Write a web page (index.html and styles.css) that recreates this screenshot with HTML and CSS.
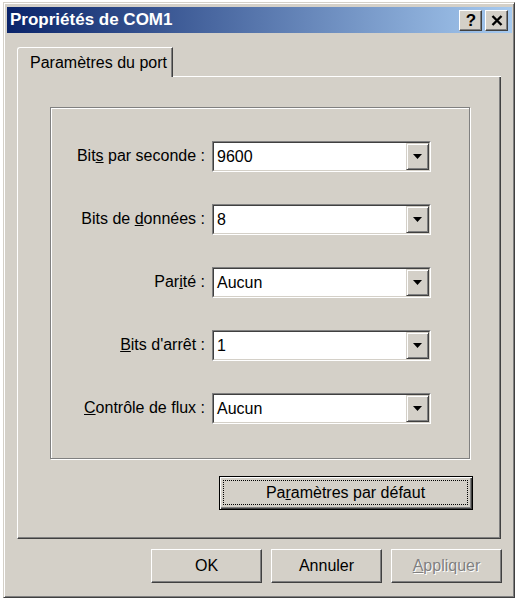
FILE: index.html
```html
<!DOCTYPE html>
<html lang="fr">
<head>
<meta charset="utf-8">
<title>Propriétés de COM1</title>
<link rel="stylesheet" href="styles.css">
</head>
<body>
<div class="window">
  <div class="titlebar">
    <span class="title">Propriétés de COM1</span>
    <div class="tbtns">
      <div class="tbtn help">?</div>
      <div class="tbtn close">
        <svg width="12" height="11" viewBox="0 0 12 11"><path d="M1.5 1 L10.5 10 M10.5 1 L1.5 10" stroke="#000" stroke-width="2.4" fill="none"/></svg>
      </div>
    </div>
  </div>
  <div class="body">
    <div class="tabs">
      <div class="tab">Paramètres du port</div>
      <div class="tabfill"></div>
    </div>
    <div class="panel">
      <div class="group">
        <label class="lbl">Bit<u>s</u> par seconde :</label>
        <div class="combo"><div class="field"><span class="val">9600</span><span class="drop"><svg width="9" height="5" viewBox="0 0 9 5"><path d="M0 0 H9 L4.5 5 Z" fill="#000"/></svg></span></div></div>

        <label class="lbl">Bits de <u>d</u>onnées :</label>
        <div class="combo"><div class="field"><span class="val">8</span><span class="drop"><svg width="9" height="5" viewBox="0 0 9 5"><path d="M0 0 H9 L4.5 5 Z" fill="#000"/></svg></span></div></div>

        <label class="lbl">Par<u>i</u>té :</label>
        <div class="combo"><div class="field"><span class="val">Aucun</span><span class="drop"><svg width="9" height="5" viewBox="0 0 9 5"><path d="M0 0 H9 L4.5 5 Z" fill="#000"/></svg></span></div></div>

        <label class="lbl"><u>B</u>its d'arrêt :</label>
        <div class="combo"><div class="field"><span class="val">1</span><span class="drop"><svg width="9" height="5" viewBox="0 0 9 5"><path d="M0 0 H9 L4.5 5 Z" fill="#000"/></svg></span></div></div>

        <label class="lbl"><u>C</u>ontrôle de flux :</label>
        <div class="combo"><div class="field"><span class="val">Aucun</span><span class="drop"><svg width="9" height="5" viewBox="0 0 9 5"><path d="M0 0 H9 L4.5 5 Z" fill="#000"/></svg></span></div></div>
      </div>
      <div class="defrow">
        <button class="btn default"><span class="focus">Pa<u>r</u>amètres par défaut</span></button>
      </div>
    </div>
    <div class="actions">
      <button class="btn"><span class="cap">OK</span></button>
      <button class="btn"><span class="cap">Annuler</span></button>
      <button class="btn disabled"><span class="cap"><u>A</u>ppliquer</span></button>
    </div>
  </div>
</div>
</body>
</html>
```

FILE: styles.css
```css
html, body {
  margin: 0;
  padding: 0;
  background: #ffffff;
}

body {
  font-family: "Liberation Sans", Arial, sans-serif;
  font-size: 16px;
  color: #000;
}

.window {
  box-sizing: border-box;
  margin: 2px 0 0 3px;
  width: 512px;
  height: 596px;
  background: #d4d0c8;
  border: 1px solid;
  border-color: #d4d0c8 #404040 #404040 #d4d0c8;
  box-shadow: inset 1px 1px 0 #ffffff, inset -1px -1px 0 #808080;
  padding: 4px 2px 3px 3px;
  display: flex;
  flex-direction: column;
}

.titlebar {
  height: 26px;
  flex: none;
  display: flex;
  align-items: center;
  justify-content: space-between;
  background: linear-gradient(to right, #0a246a, #a6caf0);
  padding: 0 4px 0 3px;
}

.title {
  color: #fff;
  font-weight: bold;
  font-size: 17px;
  white-space: nowrap;
}

.tbtns {
  display: flex;
  gap: 3px;
}

.tbtn {
  box-sizing: border-box;
  width: 23px;
  height: 21px;
  background: #d4d0c8;
  border: 1px solid;
  border-color: #ffffff #404040 #404040 #ffffff;
  box-shadow: inset -1px -1px 0 #808080, inset 1px 1px 0 #d4d0c8;
  display: flex;
  align-items: center;
  justify-content: center;
}

.help {
  font-weight: bold;
  font-size: 17px;
  line-height: 1;
  padding-left: 1px;
}

.body {
  flex: 1;
  display: flex;
  flex-direction: column;
  padding: 14px 11px 11px 10px;
}

.tabs {
  display: flex;
  height: 30px;
  flex: none;
}

.tab {
  box-sizing: border-box;
  width: 156px;
  height: 30px;
  border-top: 1px solid #fff;
  border-left: 1px solid #fff;
  border-right: 1px solid #404040;
  border-top-left-radius: 3px;
  box-shadow: inset -1px 0 0 #808080;
  padding: 5px 0 0 12px;
  white-space: nowrap;
  line-height: 20px;
}

.tabfill {
  flex: 1;
  border-bottom: 1px solid #fff;
}

.panel {
  box-sizing: border-box;
  height: 462px;
  border-left: 1px solid #fff;
  border-right: 1px solid #404040;
  border-bottom: 1px solid #404040;
  box-shadow: inset -1px -1px 0 #808080;
  padding: 30px 0 28px 32px;
  display: flex;
  flex-direction: column;
}

.group {
  box-sizing: border-box;
  width: 420px;
  height: 352px;
  border: 1px solid #808080;
  box-shadow: inset 1px 1px 0 #fff, 1px 1px 0 #fff;
  padding: 33px 0 34px 0;
  display: grid;
  grid-template-columns: 154px 219px;
  grid-auto-rows: 31px;
  row-gap: 32px;
  column-gap: 7px;
}

.lbl {
  align-self: center;
  text-align: right;
  white-space: nowrap;
  padding-bottom: 1px;
}

.combo {
  box-sizing: border-box;
  height: 31px;
  border: 1px solid;
  border-color: #808080 #ffffff #ffffff #808080;
}

.field {
  box-sizing: border-box;
  height: 29px;
  border: 1px solid;
  border-color: #404040 #d4d0c8 #d4d0c8 #404040;
  background: #fff;
  display: flex;
  align-items: center;
}

.val {
  flex: 1;
  padding-left: 3px;
  white-space: nowrap;
}

.drop {
  box-sizing: border-box;
  width: 23px;
  height: 27px;
  background: #d4d0c8;
  border: 1px solid;
  border-color: #d4d0c8 #404040 #404040 #d4d0c8;
  box-shadow: inset 1px 1px 0 #fff, inset -1px -1px 0 #808080;
  display: flex;
  align-items: center;
  justify-content: center;
  padding-bottom: 1px;
}

.drop svg {
  display: block;
}

.defrow {
  display: flex;
  justify-content: flex-end;
  padding-right: 27px;
  margin-top: 17px;
}

.btn {
  box-sizing: border-box;
  width: 111px;
  height: 34px;
  margin: 0;
  padding: 0;
  font-family: "Liberation Sans", Arial, sans-serif;
  font-size: 16px;
  color: #000;
  background: #d4d0c8;
  border: 1px solid;
  border-color: #ffffff #404040 #404040 #ffffff;
  box-shadow: inset -1px -1px 0 #808080, inset 1px 1px 0 #d4d0c8;
  display: flex;
  align-items: center;
  justify-content: center;
  appearance: none;
}

.btn.default {
  width: 254px;
  border: 1px solid #000;
  box-shadow: inset 1px 1px 0 #fff, inset -1px -1px 0 #404040, inset -2px -2px 0 #808080;
  padding: 3px 4px 4px 3px;
  align-items: stretch;
}

.focus {
  flex: 1;
  border: 1px dotted #000;
  display: flex;
  align-items: center;
  justify-content: center;
  white-space: nowrap;
}

.cap {
  white-space: nowrap;
}

.btn.disabled {
  color: #808080;
  text-shadow: 1px 1px 0 #fff;
}

.actions {
  display: flex;
  justify-content: flex-end;
  gap: 9px;
  margin-top: 10px;
  margin-right: -1px;
}
```
